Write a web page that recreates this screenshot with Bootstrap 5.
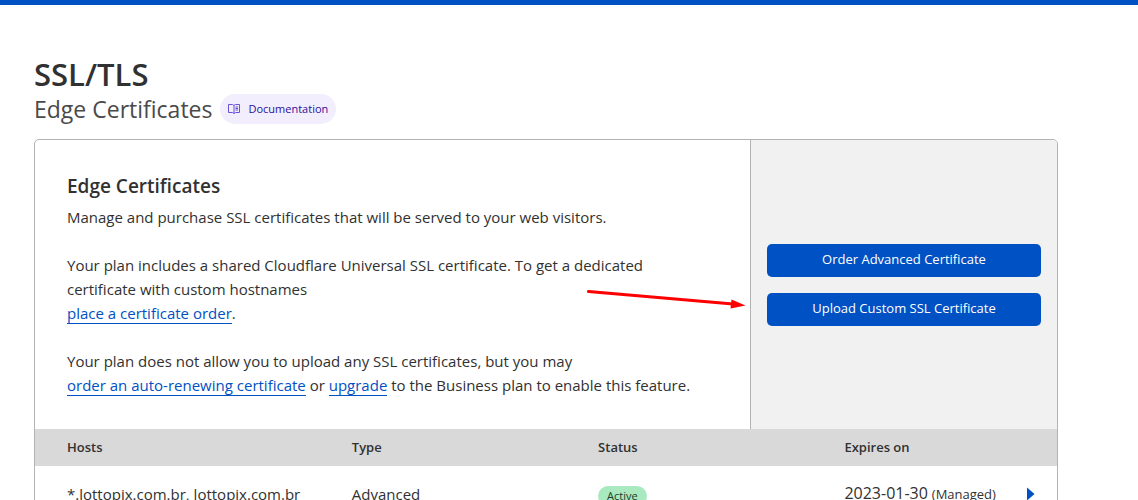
<!DOCTYPE html>
<html lang="en">
<head>
<meta charset="utf-8">
<meta name="viewport" content="width=device-width, initial-scale=1">
<title>SSL/TLS - Edge Certificates</title>
<link href="https://cdn.jsdelivr.net/npm/bootstrap@5.3.0/dist/css/bootstrap.min.css" rel="stylesheet">
<style>
  body { font-family: "Open Sans", "Noto Sans", sans-serif; font-size: 15px; line-height: 24px; color: #313131; }
  .top-line { height: 5px; background: #0051c3; }
  .page { max-width: 1138px; padding: 50px 80px 32px 34px; }
  .page-head { margin-bottom: 15px; }
  .page-title { font-size: 31px; line-height: 39px; font-weight: 600; }
  .page-sub { font-size: 23px; line-height: 30px; color: #4a4a4a; }
  .doc-link { height: 30px; padding: 0 8px; background: #f2eefd; color: #2c0f9c; font-size: 11px; }
  .panel { border: 1px solid #b3b3b3; border-radius: 5px; }
  .panel-main { padding: 32px; }
  .panel-title { font-size: 19px; line-height: 29px; font-weight: 600; }
  .panel-side { width: 307px; background: #f1f1f1; border-left: 1px solid #b3b3b3; padding: 0 16px; }
  .panel-main a { color: #0051c3; border-bottom: 1px solid #0051c3; }
  .btn-main { --bs-btn-bg: #0051c3; --bs-btn-color: #fff; --bs-btn-hover-bg: #003e99; --bs-btn-hover-color: #fff;
    height: 33px; padding: 0; border: 0; border-radius: 5px; font-size: 13px; }
  .certs { table-layout: fixed; }
  .certs th { background: #d9d9d9; font-size: 13px; line-height: 21px; font-weight: 600; padding: 8px 0; }
  .certs td { padding: 15px 0; vertical-align: middle; }
  .certs th:first-child, .certs td:first-child { padding-left: 32px; }
  .status { background: #a8e9c0; color: #1d3a29; font-size: 11px; line-height: 20px; padding: 0 9px; }
  .expiry { font-size: 16px; }
  .note { font-size: 13px; }
  .arrow { left: 552px; top: 147px; }
</style>
</head>
<body>
<div class="top-line"></div>
<main class="page">
  <header class="page-head">
    <h1 class="page-title mb-0">SSL/TLS</h1>
    <div class="d-flex align-items-center gap-2">
      <h2 class="page-sub fw-normal mb-0">Edge Certificates</h2>
      <a href="#" class="doc-link d-inline-flex align-items-center gap-2 rounded-pill text-decoration-none">
        <svg width="12" height="12" viewBox="0 0 12 12" fill="none" stroke="#6a52dc" aria-hidden="true"><path d="M.5 1.500h4L6 2.500l1.500-1h4v8h-4L6 10.500l-1.500-1h-4zM6 2.500v8M7.500 4h2.500M7.500 5.500h2.500M7.500 7h2.500"/></svg>
        Documentation
      </a>
    </div>
  </header>

  <section class="panel position-relative overflow-hidden">
    <div class="d-flex">
      <div class="panel-main flex-fill">
        <h3 class="panel-title mb-1">Edge Certificates</h3>
        <p class="mb-4">Manage and purchase SSL certificates that will be served to your web visitors.</p>
        <p class="mb-4">Your plan includes a shared Cloudflare Universal SSL certificate. To get a dedicated<br>certificate with custom hostnames<br><a href="#" class="text-decoration-none">place a certificate order</a>.</p>
        <p class="mb-0">Your plan does not allow you to upload any SSL certificates, but you may<br><a href="#" class="text-decoration-none">order an auto-renewing certificate</a> or <a href="#" class="text-decoration-none">upgrade</a> to the Business plan to enable this feature.</p>
      </div>
      <div class="panel-side flex-shrink-0 d-flex flex-column justify-content-center gap-3">
        <button type="button" class="btn btn-main w-100">Order Advanced Certificate</button>
        <button type="button" class="btn btn-main w-100">Upload Custom SSL Certificate</button>
      </div>
    </div>
    <svg class="arrow position-absolute" width="160" height="22" viewBox="0 0 160 22" aria-hidden="true"><path d="M1.500 4.500 146 17" stroke="#f00" stroke-width="3" stroke-linecap="round"/><path d="M144.500 12.500 158.500 18.500 143.500 21.500z" fill="#f00"/></svg>

    <table class="certs w-100">
      <colgroup><col style="width:31%"><col style="width:24.100%"><col style="width:24.100%"><col style="width:17.900%"><col></colgroup>
      <thead>
        <tr><th scope="col">Hosts</th><th scope="col">Type</th><th scope="col">Status</th><th scope="col" colspan="2">Expires on</th></tr>
      </thead>
      <tbody>
        <tr>
          <td>*.lottopix.com.br, lottopix.com.br</td>
          <td>Advanced</td>
          <td><span class="status rounded-pill d-inline-block">Active</span></td>
          <td><span class="expiry">2023-01-30</span> <span class="note">(Managed)</span></td>
          <td><button type="button" class="btn p-0 border-0 d-flex" aria-label="Show details"><svg width="8" height="14" viewBox="0 0 8 14"><path d="M0 0.500 7.500 7 0 13.500z" fill="#0051c3"/></svg></button></td>
        </tr>
      </tbody>
    </table>
  </section>
</main>
<script src="https://cdn.jsdelivr.net/npm/bootstrap@5.3.0/dist/js/bootstrap.bundle.min.js"></script>
</body>
</html>
